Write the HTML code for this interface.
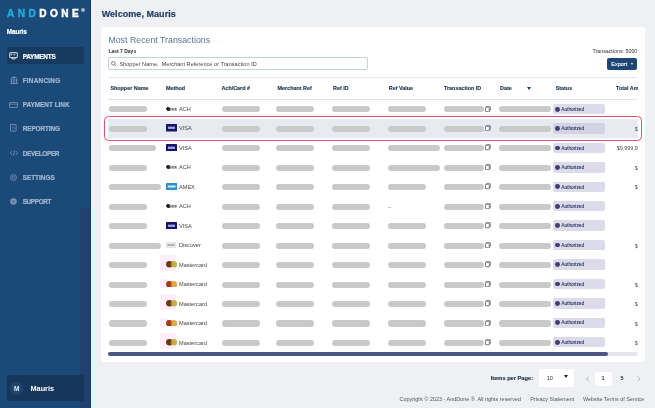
<!DOCTYPE html>
<html><head><meta charset="utf-8">
<style>
*{margin:0;padding:0;box-sizing:border-box}
html,body{width:655px;height:408px;overflow:hidden;background:#eef0f4;font-family:"Liberation Sans",sans-serif}
.abs,div{position:absolute}
svg{display:block}
#side{left:0;top:0;width:91px;height:408px;background:#1c4a78}
.logo{left:6.6px;top:8px;font-size:11px;font-weight:bold;letter-spacing:3.75px;transform:scaleX(0.92);transform-origin:0 0;-webkit-text-stroke:0.45px currentColor;line-height:11px;white-space:nowrap}
.logo .a{color:#22aadc} .logo .d{color:#fff}
.reg{left:81px;top:8px;width:4px;height:4px;border-radius:50%;background:#9fb2c6}
.uname{left:6.8px;top:27.8px;font-size:6.4px;letter-spacing:-0.12px;font-weight:bold;color:#fff;line-height:8px;-webkit-text-stroke:0.2px #fff}
.actbox{left:7px;top:47px;width:77px;height:16.5px;background:#173a60;border-radius:1px}
.nav{left:22.7px;font-size:6.4px;font-weight:bold;color:#a3b8cf;line-height:8px;-webkit-text-stroke:0.2px currentColor;white-space:nowrap}
.nav.act{color:#fff}
.nicon{opacity:.8}
.ubox{left:7.2px;top:375px;width:77px;height:25.5px;background:#17365c;border-radius:1.5px}
.ucirc{left:10.4px;top:382.2px;width:12.6px;height:12.6px;border-radius:50%;background:#1e4470;color:#e8eef5;font-size:6.5px;font-weight:bold;text-align:center;line-height:13.4px}
.uname2{left:30.5px;top:384.5px;font-size:7.3px;font-weight:bold;color:#fff;line-height:8px}
.welcome{left:101.7px;top:8.4px;font-size:9px;font-weight:bold;color:#1e3a5c;-webkit-text-stroke:0.2px #1e3a5c;line-height:12px;letter-spacing:0.05px;white-space:nowrap}
#card{left:100.8px;top:27.3px;width:544px;height:334.8px;background:#fff;border-radius:3px}
.title{left:108.4px;top:34.5px;font-size:8.8px;color:#587592;line-height:11px;letter-spacing:0px;white-space:nowrap}
.last7{left:108.4px;top:47.8px;font-size:5px;font-weight:bold;color:#2a2f36;line-height:7px;white-space:nowrap}
.search{left:107.7px;top:57.3px;width:260.5px;height:13px;border:0.7px solid #c2d3d3;border-radius:2px;background:#fff}
.sicon{left:111px;top:60.6px;width:5px;height:5px;border:0.9px solid #444;border-radius:50%}
.sline{left:115.3px;top:65px;width:2px;height:0.9px;background:#444;transform:rotate(45deg)}
.ph{left:119.4px;top:60.2px;font-size:5.5px;letter-spacing:0.05px;color:#444;line-height:8px;white-space:nowrap}
.tcount{left:580px;width:57.3px;text-align:right;top:47.8px;font-size:5.3px;color:#333;line-height:7px;white-space:nowrap}
.export{left:607px;top:57.8px;width:30.3px;height:12.6px;background:#1d4675;border-radius:2px;color:#f4f7fb;font-size:5.5px;font-weight:normal;-webkit-text-stroke:0.15px #fff;line-height:12.6px;padding-left:4.3px;white-space:nowrap}
.caret{left:630.5px;top:62.7px;width:0;height:0;border-left:1.6px solid transparent;border-right:1.6px solid transparent;border-top:2px solid #fff}
.sep{left:108px;top:77px;width:529px;height:1px;background:#e4eaea}
.th{top:85.1px;font-size:5.4px;font-weight:bold;color:#1f3449;-webkit-text-stroke:0.15px #1f3449;line-height:7px;white-space:nowrap}
.sort{left:527px;top:86.8px;width:0;height:0;border-left:2.2px solid transparent;border-right:2.2px solid transparent;border-top:3px solid #1e3a5c}
.hsep{left:108px;top:98.8px;width:529px;height:1px;background:#dfe6e6}
.clipR{left:0;top:0;width:637.5px;height:408px;overflow:hidden}
.bar{background:#c9c9c9;border-radius:3px}
.hl{left:103.5px;width:538.4px;height:24.8px;border:1.3px solid #e5506a;border-radius:4.5px}
.hlbg{left:108px;width:529.5px;height:19.1px;background:#e8eaf1}
.ic{width:11px;height:8px}
.visa{}
.visa span{position:absolute;left:0;top:0;width:11px;text-align:center;font-size:3px;font-weight:bold;color:#cfd3ff;line-height:8px}
.amex{}
.amexin{left:1.5px;top:2.5px;width:8px;height:3px;background:#bfe0f4}
.disc{}
.discin{left:2px;top:3.3px;width:7px;height:1px;background:#777}
.mcbg{background:#fdeefa}
.mtxt{left:179px;font-size:5.6px;color:#444;line-height:8px;white-space:nowrap}
.dash{left:388px;font-size:5px;color:#666;line-height:8px}
.copy{left:485.2px}
.pill{left:553.3px;width:51.5px;height:10.4px;background:#dcdbea;border-radius:2px}
.pill i{position:absolute;left:1.6px;top:2.8px;width:4.8px;height:4.8px;border-radius:50%;background:#433c72}
.pill span{position:absolute;left:7.9px;top:0.9px;font-size:4.8px;color:#2f3562;line-height:10px;-webkit-text-stroke:0.1px #2f3562;white-space:nowrap}
.total{left:580px;width:57.8px;text-align:right;font-size:5.4px;color:#4a4a4a;line-height:8px;white-space:nowrap;overflow:hidden}
.sb-track{left:108px;top:352.3px;width:529.5px;height:3.4px;background:#e3e5ea;border-radius:2px}
.sb-thumb{left:108px;top:352.3px;width:499.5px;height:3.4px;background:#4b5787;border-radius:2px}
.ipp{left:490.7px;top:374.5px;font-size:5.7px;font-weight:bold;color:#1f3449;-webkit-text-stroke:0.15px #1f3449;line-height:7px;white-space:nowrap}
.sel{left:539.3px;top:369.4px;width:35px;height:17.4px;background:#fff;border-radius:2px}
.seltxt{left:546.8px;top:374.5px;font-size:5.5px;color:#333;line-height:7px}
.selcaret{left:563.8px;top:375.3px;width:0;height:0;border-left:2.2px solid transparent;border-right:2.2px solid transparent;border-top:3px solid #222}
.pg{top:374.5px;font-size:5.5px;color:#333;line-height:7px}
.pgbox{left:595.4px;top:371.5px;width:16.8px;height:14px;background:#fff;border-radius:2px}
.foot{top:395.7px;font-size:5.45px;color:#555;line-height:7px;white-space:nowrap}
</style></head><body><div id="root" style="left:0;top:0;width:655px;height:408px;will-change:transform">
<div id="side"></div>
<div style="left:80px;top:208px;width:11px;height:200px;background:#21406f"></div>
<div style="left:89.6px;top:0;width:1.4px;height:408px;background:#173a60"></div>
<div style="left:91px;top:208px;width:4.8px;height:200px;background:#dcf8f4"></div>
<div class="logo"><span class="a">AND</span><span class="d">DONE</span></div>
<div class="reg"></div>
<div class="uname">Mauris</div>
<div class="actbox"></div>
<div class="nav act" style="top:52.70px;letter-spacing:-0.2px">PAYMENTS</div>
<div class="nicon" style="left:9.2px;top:51.6px"><svg width="9" height="8.4" viewBox="0 0 9 8.4"><rect x="0.6" y="0.6" width="7.8" height="5" rx="1" fill="none" stroke="#e6ecf3" stroke-width="1.1"/><circle cx="2.4" cy="2.6" r="0.9" fill="#e6ecf3"/><circle cx="5.4" cy="2.6" r="0.9" fill="#e6ecf3"/><path d="M2.6 5.6 Q4.5 8.6 6.8 5.6" fill="none" stroke="#e6ecf3" stroke-width="1.2"/></svg></div>
<div class="nav" style="top:76.90px;letter-spacing:0.25px">FINANCING</div>
<div class="nicon" style="left:9.6px;top:76.2px"><svg width="8" height="8" viewBox="0 0 8 8"><path d="M4 0.3 L7.7 2.2 H0.3 Z" fill="#8ea4bd"/><rect x="0.8" y="2.8" width="1.3" height="4" fill="#8ea4bd"/><rect x="3.35" y="2.8" width="1.3" height="4" fill="#8ea4bd"/><rect x="5.9" y="2.8" width="1.3" height="4" fill="#8ea4bd"/><rect x="0.3" y="7" width="7.4" height="1" fill="#8ea4bd"/></svg></div>
<div class="nav" style="top:101.10px;letter-spacing:0.0px">PAYMENT LINK</div>
<div class="nicon" style="left:9px;top:101.6px"><svg width="9" height="6" viewBox="0 0 9 6"><rect x="0.5" y="0.5" width="8" height="5" rx="0.5" fill="none" stroke="#8ea4bd" stroke-width="0.9"/><path d="M0.5 2.2 H8.5" stroke="#8ea4bd" stroke-width="0.7"/></svg></div>
<div class="nav" style="top:125.30px;letter-spacing:-0.08px">REPORTING</div>
<div class="nicon" style="left:10.3px;top:124.1px"><svg width="6.6" height="7.6" viewBox="0 0 6.6 7.6"><rect x="0.5" y="0.5" width="5.6" height="6.6" rx="0.5" fill="none" stroke="#8ea4bd" stroke-width="0.9"/><path d="M2.2 4.8 L3.3 2.6 L4.4 4.8" fill="none" stroke="#8ea4bd" stroke-width="0.6"/></svg></div>
<div class="nav" style="top:149.50px;letter-spacing:-0.33px">DEVELOPER</div>
<div class="nicon" style="left:9.6px;top:150.2px"><svg width="8" height="6" viewBox="0 0 8 6"><path d="M2.2 0.8 L0.4 3 L2.2 5.2 M5.8 0.8 L7.6 3 L5.8 5.2 M4.6 0.3 L3.4 5.7" fill="none" stroke="#8ea4bd" stroke-width="0.8"/></svg></div>
<div class="nav" style="top:173.70px;letter-spacing:0.0px">SETTINGS</div>
<div class="nicon" style="left:9.8px;top:173.8px"><svg width="7" height="7" viewBox="0 0 7 7"><circle cx="3.5" cy="3.5" r="2.9" fill="none" stroke="#8ea4bd" stroke-width="0.9"/><circle cx="3.5" cy="3.5" r="1.2" fill="none" stroke="#8ea4bd" stroke-width="0.8"/></svg></div>
<div class="nav" style="top:197.90px;letter-spacing:-0.36px">SUPPORT</div>
<div class="nicon" style="left:9.8px;top:197.8px"><svg width="7" height="7" viewBox="0 0 7 7"><circle cx="3.5" cy="3.5" r="3.3" fill="#8ea4bd"/><circle cx="3.5" cy="3.5" r="1.4" fill="#6f87a3"/></svg></div>
<div class="ubox"></div>
<div class="ucirc">M</div>
<div class="uname2">Mauris</div>

<div class="welcome">Welcome, Mauris</div>
<div id="card"></div>
<div class="title">Most Recent Transactions</div>
<div class="last7">Last 7 Days</div>
<div class="search"></div>
<div style="left:111.2px;top:61.4px"><svg width="5.6" height="5.6" viewBox="0 0 5.6 5.6"><circle cx="2.3" cy="2.3" r="1.8" fill="none" stroke="#555" stroke-width="0.7"/><path d="M3.6 3.6 L5.2 5.2" stroke="#555" stroke-width="0.8"/></svg></div>
<div class="ph">Shopper Name,&nbsp; Merchant Reference or Transaction ID</div>
<div class="tcount">Transactions: 5000</div>
<div class="export">Export</div><div class="caret"></div>
<div class="sep"></div>
<div class="clipR">
<div class="th" style="left:110.4px">Shopper Name</div>
<div class="th" style="left:166px">Method</div>
<div class="th" style="left:221.5px">Ach/Card #</div>
<div class="th" style="left:277.6px">Merchant Ref</div>
<div class="th" style="left:333px">Ref ID</div>
<div class="th" style="left:388.8px">Ref Value</div>
<div class="th" style="left:444px">Transaction ID</div>
<div class="th" style="left:500px">Date</div>
<div class="th" style="left:555.7px">Status</div>
<div class="th" style="left:616px">Total Am</div>
<div class="sort"></div>
<div class="hlbg" style="top:118.7px"></div>
<div class="hsep"></div>
<div class="bar" style="left:108.5px;top:106.10px;width:38px;height:6.4px"></div>
<div class="ic ach" style="left:166px;top:106.80px"><svg width="11" height="4" viewBox="0 0 11 4"><path d="M0 1.4 L1.4 0.1 L3.6 0.2 L4 3.8 L1.6 3.9 L0.4 2.8 Z" fill="#1a1a1a"/><rect x="4.2" y="0.9" width="6.6" height="2.6" fill="#6a6a6a"/><rect x="5.2" y="0.9" width="0.6" height="2.6" fill="#e8e8e8"/><rect x="6.8" y="0.9" width="0.6" height="2.6" fill="#e8e8e8"/><rect x="8.4" y="0.9" width="0.6" height="2.6" fill="#e8e8e8"/><rect x="9.9" y="0.9" width="0.5" height="2.6" fill="#e8e8e8"/></svg></div>
<div class="mtxt" style="top:104.70px">ACH</div>
<div class="bar" style="left:221.5px;top:106.10px;width:38px;height:6.4px"></div>
<div class="bar" style="left:275.5px;top:106.10px;width:38px;height:6.4px"></div>
<div class="bar" style="left:332px;top:106.10px;width:38px;height:6.4px"></div>
<div class="bar" style="left:388px;top:106.10px;width:38px;height:6.4px"></div>
<div class="bar" style="left:444px;top:106.10px;width:40px;height:6.4px"></div>
<div class="copy" style="top:105.50px"><svg width="5.8" height="6.2" viewBox="0 0 5.8 6.2"><rect x="1.5" y="0.4" width="3.9" height="4.6" rx="0.6" fill="none" stroke="#6b7282" stroke-width="0.8"/><rect x="0.4" y="1.2" width="3.9" height="4.6" rx="0.6" fill="#fff" stroke="#5d6474" stroke-width="0.9"/></svg></div>
<div class="bar" style="left:498.5px;top:106.10px;width:52.5px;height:6.4px"></div>
<div class="pill" style="top:103.95px"><i></i><span>Authorized</span></div>
<div class="bar" style="left:108.5px;top:125.59px;width:38px;height:6.4px"></div>
<div class="ic visa" style="left:166px;top:124.49px"><svg width="11" height="7.5" viewBox="0 0 11 7.5"><rect x="0" y="0" width="11" height="7.5" rx="0.6" fill="#16156a"/><rect x="2" y="2.6" width="7" height="2.4" fill="#8f96d6"/><rect x="2" y="3.6" width="7" height="0.5" fill="#b8bdf0"/></svg></div>
<div class="mtxt" style="top:124.19px">VISA</div>
<div class="bar" style="left:221.5px;top:125.59px;width:38px;height:6.4px"></div>
<div class="bar" style="left:275.5px;top:125.59px;width:38px;height:6.4px"></div>
<div class="bar" style="left:332px;top:125.59px;width:38px;height:6.4px"></div>
<div class="bar" style="left:388px;top:125.59px;width:38px;height:6.4px"></div>
<div class="bar" style="left:444px;top:125.59px;width:40px;height:6.4px"></div>
<div class="copy" style="top:124.99px"><svg width="5.8" height="6.2" viewBox="0 0 5.8 6.2"><rect x="1.5" y="0.4" width="3.9" height="4.6" rx="0.6" fill="none" stroke="#6b7282" stroke-width="0.8"/><rect x="0.4" y="1.2" width="3.9" height="4.6" rx="0.6" fill="#fff" stroke="#5d6474" stroke-width="0.9"/></svg></div>
<div class="bar" style="left:498.5px;top:125.59px;width:52.5px;height:6.4px"></div>
<div class="pill" style="top:123.37px;background:#d3d2e3"><i></i><span>Authorized</span></div>
<div class="total" style="top:124.79px">$</div>
<div class="bar" style="left:108.5px;top:145.08px;width:47px;height:6.4px"></div>
<div class="ic visa" style="left:166px;top:143.98px"><svg width="11" height="7.5" viewBox="0 0 11 7.5"><rect x="0" y="0" width="11" height="7.5" rx="0.6" fill="#16156a"/><rect x="2" y="2.6" width="7" height="2.4" fill="#8f96d6"/><rect x="2" y="3.6" width="7" height="0.5" fill="#b8bdf0"/></svg></div>
<div class="mtxt" style="top:143.68px">VISA</div>
<div class="bar" style="left:221.5px;top:145.08px;width:38px;height:6.4px"></div>
<div class="bar" style="left:275.5px;top:145.08px;width:38px;height:6.4px"></div>
<div class="bar" style="left:332px;top:145.08px;width:38px;height:6.4px"></div>
<div class="bar" style="left:388px;top:145.08px;width:52px;height:6.4px"></div>
<div class="bar" style="left:444px;top:145.08px;width:40px;height:6.4px"></div>
<div class="copy" style="top:144.48px"><svg width="5.8" height="6.2" viewBox="0 0 5.8 6.2"><rect x="1.5" y="0.4" width="3.9" height="4.6" rx="0.6" fill="none" stroke="#6b7282" stroke-width="0.8"/><rect x="0.4" y="1.2" width="3.9" height="4.6" rx="0.6" fill="#fff" stroke="#5d6474" stroke-width="0.9"/></svg></div>
<div class="bar" style="left:498.5px;top:145.08px;width:52.5px;height:6.4px"></div>
<div class="pill" style="top:142.79px"><i></i><span>Authorized</span></div>
<div class="total" style="top:144.28px">$9,999,9</div>
<div class="bar" style="left:108.5px;top:164.57px;width:38px;height:6.4px"></div>
<div class="ic ach" style="left:166px;top:165.27px"><svg width="11" height="4" viewBox="0 0 11 4"><path d="M0 1.4 L1.4 0.1 L3.6 0.2 L4 3.8 L1.6 3.9 L0.4 2.8 Z" fill="#1a1a1a"/><rect x="4.2" y="0.9" width="6.6" height="2.6" fill="#6a6a6a"/><rect x="5.2" y="0.9" width="0.6" height="2.6" fill="#e8e8e8"/><rect x="6.8" y="0.9" width="0.6" height="2.6" fill="#e8e8e8"/><rect x="8.4" y="0.9" width="0.6" height="2.6" fill="#e8e8e8"/><rect x="9.9" y="0.9" width="0.5" height="2.6" fill="#e8e8e8"/></svg></div>
<div class="mtxt" style="top:163.17px">ACH</div>
<div class="bar" style="left:221.5px;top:164.57px;width:38px;height:6.4px"></div>
<div class="bar" style="left:275.5px;top:164.57px;width:38px;height:6.4px"></div>
<div class="bar" style="left:332px;top:164.57px;width:38px;height:6.4px"></div>
<div class="bar" style="left:388px;top:164.57px;width:52px;height:6.4px"></div>
<div class="bar" style="left:444px;top:164.57px;width:40px;height:6.4px"></div>
<div class="copy" style="top:163.97px"><svg width="5.8" height="6.2" viewBox="0 0 5.8 6.2"><rect x="1.5" y="0.4" width="3.9" height="4.6" rx="0.6" fill="none" stroke="#6b7282" stroke-width="0.8"/><rect x="0.4" y="1.2" width="3.9" height="4.6" rx="0.6" fill="#fff" stroke="#5d6474" stroke-width="0.9"/></svg></div>
<div class="bar" style="left:498.5px;top:164.57px;width:52.5px;height:6.4px"></div>
<div class="pill" style="top:162.21px"><i></i><span>Authorized</span></div>
<div class="total" style="top:163.77px">$</div>
<div class="bar" style="left:108.5px;top:184.06px;width:52px;height:6.4px"></div>
<div class="ic amex" style="left:165.8px;top:183.06px"><svg width="11.4" height="7" viewBox="0 0 11.4 7"><rect x="0" y="0" width="11.4" height="7" rx="0.6" fill="#2f8fc6"/><rect x="1.8" y="2.4" width="7.8" height="2.2" fill="#c4e6fa"/></svg></div>
<div class="mtxt" style="top:182.66px">AMEX</div>
<div class="bar" style="left:221.5px;top:184.06px;width:38px;height:6.4px"></div>
<div class="bar" style="left:275.5px;top:184.06px;width:38px;height:6.4px"></div>
<div class="bar" style="left:332px;top:184.06px;width:38px;height:6.4px"></div>
<div class="bar" style="left:388px;top:184.06px;width:38px;height:6.4px"></div>
<div class="bar" style="left:444px;top:184.06px;width:40px;height:6.4px"></div>
<div class="copy" style="top:183.46px"><svg width="5.8" height="6.2" viewBox="0 0 5.8 6.2"><rect x="1.5" y="0.4" width="3.9" height="4.6" rx="0.6" fill="none" stroke="#6b7282" stroke-width="0.8"/><rect x="0.4" y="1.2" width="3.9" height="4.6" rx="0.6" fill="#fff" stroke="#5d6474" stroke-width="0.9"/></svg></div>
<div class="bar" style="left:498.5px;top:184.06px;width:52.5px;height:6.4px"></div>
<div class="pill" style="top:181.63px"><i></i><span>Authorized</span></div>
<div class="total" style="top:183.26px">$</div>
<div class="bar" style="left:108.5px;top:203.55px;width:38px;height:6.4px"></div>
<div class="ic ach" style="left:166px;top:204.25px"><svg width="11" height="4" viewBox="0 0 11 4"><path d="M0 1.4 L1.4 0.1 L3.6 0.2 L4 3.8 L1.6 3.9 L0.4 2.8 Z" fill="#1a1a1a"/><rect x="4.2" y="0.9" width="6.6" height="2.6" fill="#6a6a6a"/><rect x="5.2" y="0.9" width="0.6" height="2.6" fill="#e8e8e8"/><rect x="6.8" y="0.9" width="0.6" height="2.6" fill="#e8e8e8"/><rect x="8.4" y="0.9" width="0.6" height="2.6" fill="#e8e8e8"/><rect x="9.9" y="0.9" width="0.5" height="2.6" fill="#e8e8e8"/></svg></div>
<div class="mtxt" style="top:202.15px">ACH</div>
<div class="bar" style="left:221.5px;top:203.55px;width:38px;height:6.4px"></div>
<div class="bar" style="left:275.5px;top:203.55px;width:38px;height:6.4px"></div>
<div class="bar" style="left:332px;top:203.55px;width:38px;height:6.4px"></div>
<div class="dash" style="top:202.75px">--</div>
<div class="bar" style="left:444px;top:203.55px;width:40px;height:6.4px"></div>
<div class="copy" style="top:202.95px"><svg width="5.8" height="6.2" viewBox="0 0 5.8 6.2"><rect x="1.5" y="0.4" width="3.9" height="4.6" rx="0.6" fill="none" stroke="#6b7282" stroke-width="0.8"/><rect x="0.4" y="1.2" width="3.9" height="4.6" rx="0.6" fill="#fff" stroke="#5d6474" stroke-width="0.9"/></svg></div>
<div class="bar" style="left:498.5px;top:203.55px;width:52.5px;height:6.4px"></div>
<div class="pill" style="top:201.05px"><i></i><span>Authorized</span></div>
<div class="bar" style="left:108.5px;top:223.04px;width:38px;height:6.4px"></div>
<div class="ic visa" style="left:166px;top:221.94px"><svg width="11" height="7.5" viewBox="0 0 11 7.5"><rect x="0" y="0" width="11" height="7.5" rx="0.6" fill="#16156a"/><rect x="2" y="2.6" width="7" height="2.4" fill="#8f96d6"/><rect x="2" y="3.6" width="7" height="0.5" fill="#b8bdf0"/></svg></div>
<div class="mtxt" style="top:221.64px">VISA</div>
<div class="bar" style="left:221.5px;top:223.04px;width:38px;height:6.4px"></div>
<div class="bar" style="left:275.5px;top:223.04px;width:38px;height:6.4px"></div>
<div class="bar" style="left:332px;top:223.04px;width:38px;height:6.4px"></div>
<div class="bar" style="left:388px;top:223.04px;width:38px;height:6.4px"></div>
<div class="bar" style="left:444px;top:223.04px;width:40px;height:6.4px"></div>
<div class="copy" style="top:222.44px"><svg width="5.8" height="6.2" viewBox="0 0 5.8 6.2"><rect x="1.5" y="0.4" width="3.9" height="4.6" rx="0.6" fill="none" stroke="#6b7282" stroke-width="0.8"/><rect x="0.4" y="1.2" width="3.9" height="4.6" rx="0.6" fill="#fff" stroke="#5d6474" stroke-width="0.9"/></svg></div>
<div class="bar" style="left:498.5px;top:223.04px;width:52.5px;height:6.4px"></div>
<div class="pill" style="top:220.47px"><i></i><span>Authorized</span></div>
<div class="bar" style="left:108.5px;top:242.53px;width:52px;height:6.4px"></div>
<div class="ic disc" style="left:166.4px;top:242.13px"><svg width="10.2" height="6" viewBox="0 0 10.2 6"><rect x="0.3" y="0.3" width="9.6" height="5.4" rx="0.8" fill="#ececec" stroke="#d6d6d6" stroke-width="0.6"/><rect x="1.5" y="2.5" width="7" height="1" fill="#7a7a7a"/></svg></div>
<div class="mtxt" style="top:241.13px">Discover</div>
<div class="bar" style="left:221.5px;top:242.53px;width:38px;height:6.4px"></div>
<div class="bar" style="left:275.5px;top:242.53px;width:38px;height:6.4px"></div>
<div class="bar" style="left:332px;top:242.53px;width:38px;height:6.4px"></div>
<div class="bar" style="left:388px;top:242.53px;width:38px;height:6.4px"></div>
<div class="bar" style="left:444px;top:242.53px;width:40px;height:6.4px"></div>
<div class="copy" style="top:241.93px"><svg width="5.8" height="6.2" viewBox="0 0 5.8 6.2"><rect x="1.5" y="0.4" width="3.9" height="4.6" rx="0.6" fill="none" stroke="#6b7282" stroke-width="0.8"/><rect x="0.4" y="1.2" width="3.9" height="4.6" rx="0.6" fill="#fff" stroke="#5d6474" stroke-width="0.9"/></svg></div>
<div class="bar" style="left:498.5px;top:242.53px;width:52.5px;height:6.4px"></div>
<div class="pill" style="top:239.89px"><i></i><span>Authorized</span></div>
<div class="total" style="top:241.73px">$</div>
<div class="bar" style="left:108.5px;top:262.02px;width:38px;height:6.4px"></div>
<div class="mcbg" style="left:159.8px;top:255.22px;width:16px;height:16px"></div><div class="ic mc" style="left:165.8px;top:261.32px"><svg width="11.4" height="6.6" viewBox="0 0 11.4 6.6"><circle cx="3.4" cy="3.3" r="3.3" fill="#6e3414"/><circle cx="8" cy="3.3" r="3.3" fill="#bda424" fill-opacity="0.85"/></svg></div>
<div class="mtxt" style="top:260.62px">Mastercard</div>
<div class="bar" style="left:221.5px;top:262.02px;width:38px;height:6.4px"></div>
<div class="bar" style="left:275.5px;top:262.02px;width:38px;height:6.4px"></div>
<div class="bar" style="left:332px;top:262.02px;width:38px;height:6.4px"></div>
<div class="bar" style="left:388px;top:262.02px;width:38px;height:6.4px"></div>
<div class="bar" style="left:444px;top:262.02px;width:40px;height:6.4px"></div>
<div class="copy" style="top:261.42px"><svg width="5.8" height="6.2" viewBox="0 0 5.8 6.2"><rect x="1.5" y="0.4" width="3.9" height="4.6" rx="0.6" fill="none" stroke="#6b7282" stroke-width="0.8"/><rect x="0.4" y="1.2" width="3.9" height="4.6" rx="0.6" fill="#fff" stroke="#5d6474" stroke-width="0.9"/></svg></div>
<div class="bar" style="left:498.5px;top:262.02px;width:52.5px;height:6.4px"></div>
<div class="pill" style="top:259.31px"><i></i><span>Authorized</span></div>
<div class="bar" style="left:108.5px;top:281.51px;width:38px;height:6.4px"></div>
<div class="mcbg" style="left:159.8px;top:279.11px;width:8px;height:8.6px"></div><div class="ic mc" style="left:165.8px;top:280.81px"><svg width="11.4" height="6.6" viewBox="0 0 11.4 6.6"><circle cx="3.4" cy="3.3" r="3.3" fill="#a8341a"/><circle cx="8" cy="3.3" r="3.3" fill="#d99a24" fill-opacity="0.85"/></svg></div>
<div class="mtxt" style="top:280.11px">Mastercard</div>
<div class="bar" style="left:221.5px;top:281.51px;width:38px;height:6.4px"></div>
<div class="bar" style="left:275.5px;top:281.51px;width:38px;height:6.4px"></div>
<div class="bar" style="left:332px;top:281.51px;width:38px;height:6.4px"></div>
<div class="bar" style="left:388px;top:281.51px;width:38px;height:6.4px"></div>
<div class="bar" style="left:444px;top:281.51px;width:40px;height:6.4px"></div>
<div class="copy" style="top:280.91px"><svg width="5.8" height="6.2" viewBox="0 0 5.8 6.2"><rect x="1.5" y="0.4" width="3.9" height="4.6" rx="0.6" fill="none" stroke="#6b7282" stroke-width="0.8"/><rect x="0.4" y="1.2" width="3.9" height="4.6" rx="0.6" fill="#fff" stroke="#5d6474" stroke-width="0.9"/></svg></div>
<div class="bar" style="left:498.5px;top:281.51px;width:52.5px;height:6.4px"></div>
<div class="pill" style="top:278.73px"><i></i><span>Authorized</span></div>
<div class="total" style="top:280.71px">$</div>
<div class="bar" style="left:108.5px;top:301.00px;width:38px;height:6.4px"></div>
<div class="mcbg" style="left:159.8px;top:294.20px;width:16px;height:16px"></div><div class="ic mc" style="left:165.8px;top:300.30px"><svg width="11.4" height="6.6" viewBox="0 0 11.4 6.6"><circle cx="3.4" cy="3.3" r="3.3" fill="#6e3414"/><circle cx="8" cy="3.3" r="3.3" fill="#bda424" fill-opacity="0.85"/></svg></div>
<div class="mtxt" style="top:299.60px">Mastercard</div>
<div class="bar" style="left:221.5px;top:301.00px;width:38px;height:6.4px"></div>
<div class="bar" style="left:275.5px;top:301.00px;width:38px;height:6.4px"></div>
<div class="bar" style="left:332px;top:301.00px;width:38px;height:6.4px"></div>
<div class="bar" style="left:388px;top:301.00px;width:38px;height:6.4px"></div>
<div class="bar" style="left:444px;top:301.00px;width:40px;height:6.4px"></div>
<div class="copy" style="top:300.40px"><svg width="5.8" height="6.2" viewBox="0 0 5.8 6.2"><rect x="1.5" y="0.4" width="3.9" height="4.6" rx="0.6" fill="none" stroke="#6b7282" stroke-width="0.8"/><rect x="0.4" y="1.2" width="3.9" height="4.6" rx="0.6" fill="#fff" stroke="#5d6474" stroke-width="0.9"/></svg></div>
<div class="bar" style="left:498.5px;top:301.00px;width:52.5px;height:6.4px"></div>
<div class="pill" style="top:298.15px"><i></i><span>Authorized</span></div>
<div class="total" style="top:300.20px">$</div>
<div class="bar" style="left:108.5px;top:320.49px;width:38px;height:6.4px"></div>
<div class="mcbg" style="left:159.8px;top:318.09px;width:8px;height:8.6px"></div><div class="ic mc" style="left:165.8px;top:319.79px"><svg width="11.4" height="6.6" viewBox="0 0 11.4 6.6"><circle cx="3.4" cy="3.3" r="3.3" fill="#a8341a"/><circle cx="8" cy="3.3" r="3.3" fill="#d99a24" fill-opacity="0.85"/></svg></div>
<div class="mtxt" style="top:319.09px">Mastercard</div>
<div class="bar" style="left:221.5px;top:320.49px;width:38px;height:6.4px"></div>
<div class="bar" style="left:275.5px;top:320.49px;width:38px;height:6.4px"></div>
<div class="bar" style="left:332px;top:320.49px;width:38px;height:6.4px"></div>
<div class="bar" style="left:388px;top:320.49px;width:38px;height:6.4px"></div>
<div class="bar" style="left:444px;top:320.49px;width:40px;height:6.4px"></div>
<div class="copy" style="top:319.89px"><svg width="5.8" height="6.2" viewBox="0 0 5.8 6.2"><rect x="1.5" y="0.4" width="3.9" height="4.6" rx="0.6" fill="none" stroke="#6b7282" stroke-width="0.8"/><rect x="0.4" y="1.2" width="3.9" height="4.6" rx="0.6" fill="#fff" stroke="#5d6474" stroke-width="0.9"/></svg></div>
<div class="bar" style="left:498.5px;top:320.49px;width:52.5px;height:6.4px"></div>
<div class="pill" style="top:317.57px"><i></i><span>Authorized</span></div>
<div class="total" style="top:319.69px">$</div>
<div class="bar" style="left:108.5px;top:339.98px;width:38px;height:6.4px"></div>
<div class="mcbg" style="left:159.8px;top:333.18px;width:16px;height:16px"></div><div class="ic mc" style="left:165.8px;top:339.28px"><svg width="11.4" height="6.6" viewBox="0 0 11.4 6.6"><circle cx="3.4" cy="3.3" r="3.3" fill="#6e3414"/><circle cx="8" cy="3.3" r="3.3" fill="#bda424" fill-opacity="0.85"/></svg></div>
<div class="mtxt" style="top:338.58px">Mastercard</div>
<div class="bar" style="left:221.5px;top:339.98px;width:38px;height:6.4px"></div>
<div class="bar" style="left:275.5px;top:339.98px;width:38px;height:6.4px"></div>
<div class="bar" style="left:332px;top:339.98px;width:38px;height:6.4px"></div>
<div class="bar" style="left:388px;top:339.98px;width:38px;height:6.4px"></div>
<div class="bar" style="left:444px;top:339.98px;width:40px;height:6.4px"></div>
<div class="copy" style="top:339.38px"><svg width="5.8" height="6.2" viewBox="0 0 5.8 6.2"><rect x="1.5" y="0.4" width="3.9" height="4.6" rx="0.6" fill="none" stroke="#6b7282" stroke-width="0.8"/><rect x="0.4" y="1.2" width="3.9" height="4.6" rx="0.6" fill="#fff" stroke="#5d6474" stroke-width="0.9"/></svg></div>
<div class="bar" style="left:498.5px;top:339.98px;width:52.5px;height:6.4px"></div>
<div class="pill" style="top:336.99px"><i></i><span>Authorized</span></div>
<div class="total" style="top:339.18px">$</div>
</div>
<div class="hl" style="top:116px"></div>
<div class="sb-track"></div>
<div class="sb-thumb"></div>

<div class="ipp">Items per Page:</div>
<div class="sel"></div>
<div class="seltxt">10</div>
<div class="selcaret"></div>
<div style="left:585.6px;top:375.6px"><svg width="3.6" height="5.6" viewBox="0 0 3.6 5.6"><path d="M3 0.4 L0.6 2.8 L3 5.2" fill="none" stroke="#8a8f99" stroke-width="0.7"/></svg></div>
<div class="pgbox"></div>
<div class="pg" style="left:601.5px;font-weight:bold">1</div>
<div class="pg" style="left:620.5px;font-weight:bold">5</div>
<div style="left:636.6px;top:375.6px"><svg width="3.6" height="5.6" viewBox="0 0 3.6 5.6"><path d="M0.6 0.4 L3 2.8 L0.6 5.2" fill="none" stroke="#8a8f99" stroke-width="0.7"/></svg></div>
<div class="foot" style="left:399.6px">Copyright © 2023 - AndDone ®. All rights reserved</div>
<div class="foot" style="left:530.2px">Privacy Statement</div>
<div class="foot" style="left:582.9px">Website Terms of Service</div>
</div></body></html>
